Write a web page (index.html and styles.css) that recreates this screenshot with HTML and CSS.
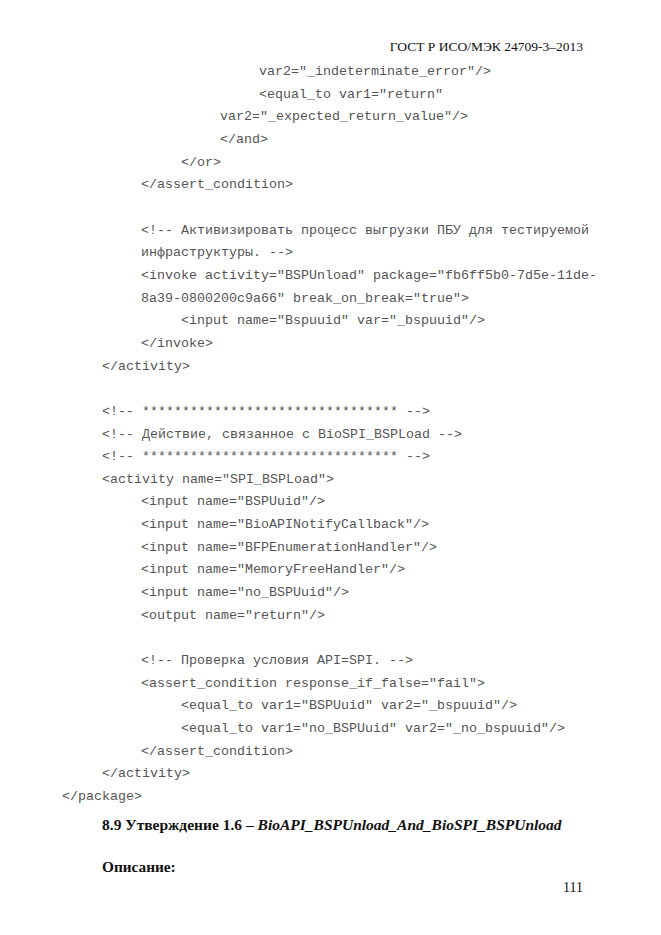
FILE: index.html
```html
<!DOCTYPE html>
<html lang="ru">
<head>
<meta charset="utf-8">
<link rel="stylesheet" href="styles.css">
</head>
<body>
<div class="page">
  <div class="running-head">ГОСТ Р ИСО/МЭК 24709-3–2013</div>
  <div class="code">
    <div class="ln i5">var2="_indeterminate_error"/&gt;</div>
    <div class="ln i5">&lt;equal_to var1="return"</div>
    <div class="ln i4">var2="_expected_return_value"/&gt;</div>
    <div class="ln i4">&lt;/and&gt;</div>
    <div class="ln i3">&lt;/or&gt;</div>
    <div class="ln i2">&lt;/assert_condition&gt;</div>
    <div class="ln"></div>
    <div class="ln i2">&lt;!-- Активизировать процесс выгрузки ПБУ для тестируемой</div>
    <div class="ln i2">инфраструктуры. --&gt;</div>
    <div class="ln i2">&lt;invoke activity="BSPUnload" package="fb6ff5b0-7d5e-11de-</div>
    <div class="ln i2">8a39-0800200c9a66" break_on_break="true"&gt;</div>
    <div class="ln i3">&lt;input name="Bspuuid" var="_bspuuid"/&gt;</div>
    <div class="ln i2">&lt;/invoke&gt;</div>
    <div class="ln i1">&lt;/activity&gt;</div>
    <div class="ln"></div>
    <div class="ln i1">&lt;!-- ******************************** --&gt;</div>
    <div class="ln i1">&lt;!-- Действие, связанное с BioSPI_BSPLoad --&gt;</div>
    <div class="ln i1">&lt;!-- ******************************** --&gt;</div>
    <div class="ln i1">&lt;activity name="SPI_BSPLoad"&gt;</div>
    <div class="ln i2">&lt;input name="BSPUuid"/&gt;</div>
    <div class="ln i2">&lt;input name="BioAPINotifyCallback"/&gt;</div>
    <div class="ln i2">&lt;input name="BFPEnumerationHandler"/&gt;</div>
    <div class="ln i2">&lt;input name="MemoryFreeHandler"/&gt;</div>
    <div class="ln i2">&lt;input name="no_BSPUuid"/&gt;</div>
    <div class="ln i2">&lt;output name="return"/&gt;</div>
    <div class="ln"></div>
    <div class="ln i2">&lt;!-- Проверка условия API=SPI. --&gt;</div>
    <div class="ln i2">&lt;assert_condition response_if_false="fail"&gt;</div>
    <div class="ln i3">&lt;equal_to var1="BSPUuid" var2="_bspuuid"/&gt;</div>
    <div class="ln i3">&lt;equal_to var1="no_BSPUuid" var2="_no_bspuuid"/&gt;</div>
    <div class="ln i2">&lt;/assert_condition&gt;</div>
    <div class="ln i1">&lt;/activity&gt;</div>
    <div class="ln">&lt;/package&gt;</div>
  </div>
  <h2 class="section-title">8.9 Утверждение 1.6 – <em>BioAPI_BSPUnload_And_BioSPI_BSPUnload</em></h2>
  <p class="label">Описание:</p>
  <div class="page-number">111</div>
</div>
</body>
</html>
```

FILE: styles.css
```css
html, body {
  margin: 0;
  padding: 0;
  background: #ffffff;
}

.page {
  width: 661px;
  height: 935px;
  box-sizing: border-box;
  padding: 39px 78px 0 62px;
  font-family: "Liberation Serif", "Times New Roman", serif;
  color: #111;
}

.running-head {
  text-align: right;
  font-size: 13.5px;
  line-height: 16px;
  height: 16px;
  margin-bottom: 6px;
}

.code {
  font-family: "Liberation Mono", "Courier New", monospace;
  font-size: 13.33px;
  color: #555;
}

.ln {
  white-space: pre;
  height: 22.66px;
  line-height: 22.66px;
}

.i1 { margin-left: 40px; }
.i2 { margin-left: 79px; }
.i3 { margin-left: 119px; }
.i4 { margin-left: 158px; }
.i5 { margin-left: 197px; }

.section-title {
  margin: 6px 0 0 40px;
  font-size: 15.5px;
  line-height: 20px;
  font-weight: bold;
}

.section-title em {
  font-style: italic;
}

.label {
  margin: 22px 0 0 40px;
  font-size: 15.3px;
  line-height: 20px;
  font-weight: bold;
}

.page-number {
  text-align: right;
  font-size: 14px;
  line-height: 16px;
  margin-top: 3px;
}
```
